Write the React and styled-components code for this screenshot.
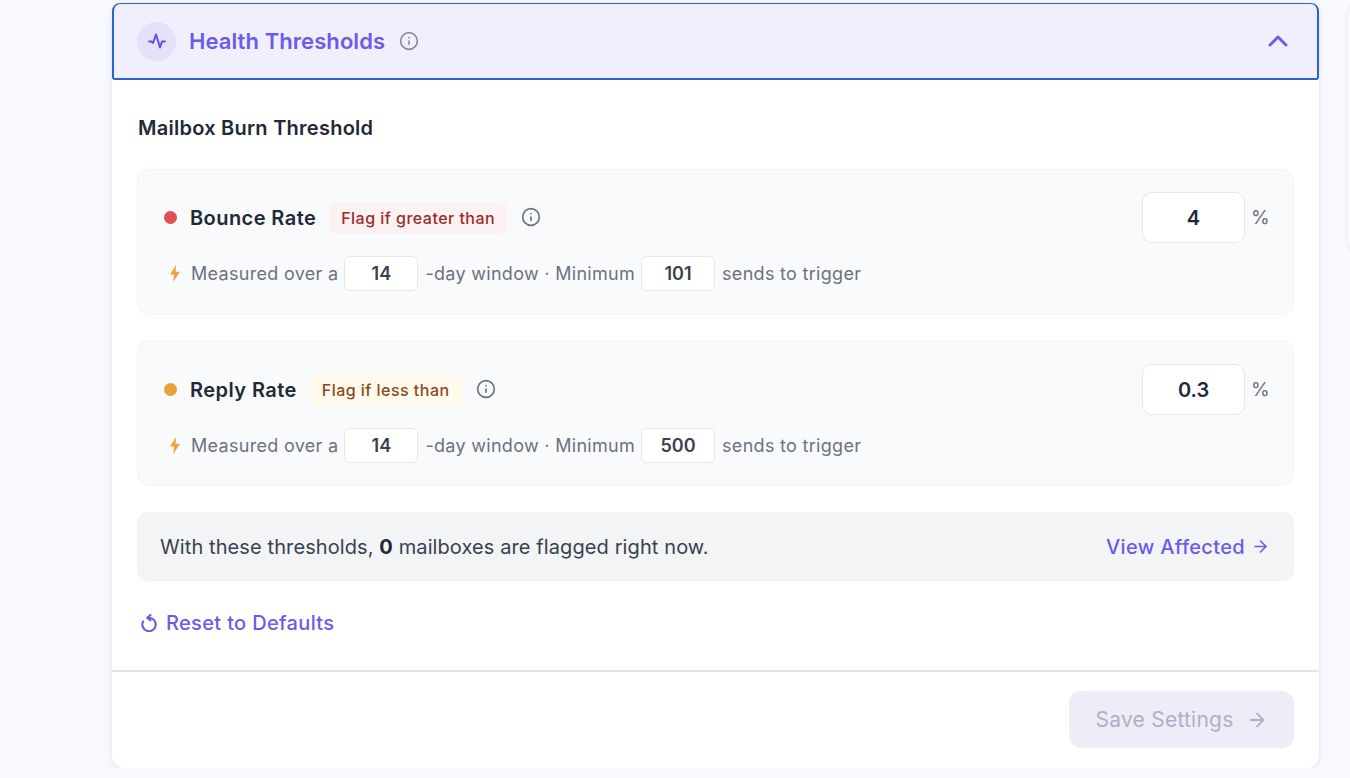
import { createGlobalStyle, styled } from "styled-components";
import { ChevronUp, Info, ArrowRight } from "lucide-react";

const GlobalStyle = createGlobalStyle`
  html, body {
    margin: 0;
    height: 778px;
    overflow: hidden;
    background: #f8f9ff;
    font-family: "Inter", "Liberation Sans", sans-serif;
  }
`;

const Page = styled.div`
  display: flex;
  align-items: flex-start;
  gap: 28px;
  width: 1350px;
  padding: 3px 0 0 112px;
  box-sizing: border-box;
  overflow: hidden;
`;

const Card = styled.div`
  flex: 0 0 1207px;
  background: #fff;
  border-radius: 12px;
  box-shadow: 0 1px 5px rgba(90, 90, 180, 0.16);
`;

const SidePanel = styled.div`
  flex: 0 0 100px;
  height: 250px;
  border-radius: 12px;
  background: #f8f9ff;
  box-shadow: 0 0 2px rgba(90, 90, 180, 0.2);
`;

const Header = styled.div`
  display: flex;
  align-items: center;
  height: 77px;
  box-sizing: border-box;
  padding: 0 23px 0 23px;
  background: #f1effd;
  border: 2px solid #2b62cc;
  border-top-width: 1px;
  border-radius: 8px 8px 3px 3px;
`;

const IconCircle = styled.div`
  display: flex;
  align-items: center;
  justify-content: center;
  width: 39px;
  height: 39px;
  border-radius: 50%;
  background: #e4e1f9;
  color: #5f52e0;
`;

const HeaderTitle = styled.div`
  margin-left: 13px;
  font-size: 22px;
  font-weight: 600;
  color: #6a5be8;
  letter-spacing: 0.07px;
`;

const InfoIcon = styled(Info)`
  margin-left: 14px;
  color: ${props => props.$color};
  flex: none;
`;

const RowInfoIcon = styled(InfoIcon)`
  margin-bottom: 2px;
`;

const Chevron = styled(ChevronUp)`
  margin-left: auto;
  color: #6a5be8;
`;

const Body = styled.div`
  padding: 34px 25px 0;
`;

const SectionTitle = styled.div`
  font-size: 20px;
  line-height: 28px;
  font-weight: 600;
  color: #1f2937;
  letter-spacing: 0.25px;
  margin-bottom: 27px;
  padding-left: 1px;
`;

const Panel = styled.div`
  height: 146px;
  box-sizing: border-box;
  padding: ${props => props.$top}px 26px 0;
  margin-bottom: 25px;
  background: #f9fafc;
  border: 1px solid #f3f4f6;
  border-radius: 12px;
`;

const TopRow = styled.div`
  display: flex;
  align-items: center;
  height: 51px;
`;

const Dot = styled.span`
  width: 13px;
  height: 13px;
  border-radius: 50%;
  background: ${props => props.$color};
  flex: none;
`;

const RateName = styled.span`
  margin-left: 13px;
  font-size: 20px;
  font-weight: 600;
  color: #1f2937;
  letter-spacing: 0.43px;
`;

const Tag = styled.span`
  margin-left: 13px;
  padding: 0 12px;
  height: 32px;
  display: inline-flex;
  align-items: center;
  border-radius: 6px;
  font-size: 16px;
  font-weight: 500;
  letter-spacing: 0.47px;
  color: ${props => props.$color};
  background: ${props => props.$bg};
`;

const BigInput = styled.div`
  margin-left: auto;
  width: 103px;
  height: 51px;
  box-sizing: border-box;
  display: flex;
  align-items: center;
  justify-content: center;
  background: #fff;
  border: 1px solid #e5e7eb;
  border-radius: 10px;
  font-size: 20px;
  font-weight: 600;
  color: #1f2937;
`;

const Unit = styled.span`
  width: 16px;
  margin-left: 6px;
  font-size: 19px;
  color: #6b7280;
`;

const SubRow = styled.div`
  display: flex;
  align-items: center;
  height: 35px;
  margin-top: 13px;
  padding-left: 6px;
  font-size: 18px;
  letter-spacing: 0.3px;
  color: #6b7280;
  white-space: nowrap;
`;

const Bolt = styled.svg`
  margin-right: 11px;
  flex: none;
`;

const SmallInput = styled.span`
  width: 74px;
  height: 35px;
  margin: 0 7px 0 6px;
  box-sizing: border-box;
  display: inline-flex;
  align-items: center;
  justify-content: center;
  background: #fff;
  border: 1px solid #e5e7eb;
  border-radius: 6px;
  font-size: 18px;
  font-weight: 600;
  letter-spacing: 0;
  color: #374151;
`;

const Notice = styled.div`
  display: flex;
  align-items: center;
  justify-content: space-between;
  height: 69px;
  box-sizing: border-box;
  margin-top: 26px;
  padding: 0 24px 0 23px;
  background: #f3f4f6;
  border-radius: 10px;
  font-size: 20px;
  letter-spacing: 0.1px;
  color: #374151;
  b {
    font-weight: 700;
    color: #1f2937;
  }
`;

const LinkText = styled.span`
  display: inline-flex;
  align-items: center;
  gap: ${props => props.$gap}px;
  font-size: 20px;
  font-weight: 500;
  letter-spacing: 0.34px;
  color: #6a5be8;
`;

const ResetRow = styled.div`
  display: flex;
  height: 34px;
  align-items: center;
  margin-top: 25px;
  padding-left: 3px;
`;

const Footer = styled.div`
  display: flex;
  justify-content: flex-end;
  margin-top: 30px;
  padding: 19px 25px 20px;
  border-top: 2px solid #e5e5e5;
`;

const SaveButton = styled.button`
  display: flex;
  align-items: center;
  justify-content: center;
  gap: 12px;
  width: 225px;
  height: 57px;
  border: 0;
  border-radius: 12px;
  background: #edecf7;
  color: #b0afc6;
  font-family: inherit;
  font-size: 21px;
  font-weight: 400;
  letter-spacing: 0.25px;
`;

const rates = [
  { name: "Bounce Rate", color: "#e05050", flag: "Flag if greater than", tagColor: "#9b2c2c", tagBg: "#fdf2f2", value: "4", min: "101", top: 22 },
  { name: "Reply Rate", color: "#eba038", flag: "Flag if less than", tagColor: "#8a4a1f", tagBg: "#fffaeb", value: "0.3", min: "500", top: 23 },
];

function PulseIcon() {
  return (
    <svg width="18" height="16" viewBox="0 0 18 16" fill="none" stroke="currentColor" strokeWidth="2" strokeLinecap="round" strokeLinejoin="round">
      <path d="M1 8.5H3.5L5 10L8 1.5L12 14.5L14 8.5H17" />
    </svg>
  );
}

function ResetIcon() {
  return (
    <svg width="18" height="18" viewBox="0 0 18 18" fill="none" stroke="currentColor" strokeWidth="2.1" strokeLinecap="round" strokeLinejoin="round">
      <path d="M9 3.8A6.7 6.7 0 1 1 3.1 7.4" />
      <path d="M10.5 1L7.2 3.8L10.5 6.4" />
    </svg>
  );
}

function App() {
  return (
    <>
      <GlobalStyle />
      <Page>
        <Card>
          <Header>
            <IconCircle><PulseIcon /></IconCircle>
            <HeaderTitle>Health Thresholds</HeaderTitle>
            <InfoIcon size={20} $color="#8b8ba3" />
            <Chevron size={32} strokeWidth={2.2} />
          </Header>
          <Body>
            <SectionTitle>Mailbox Burn Threshold</SectionTitle>
            {rates.map(rate => (
              <Panel key={rate.name} $top={rate.top}>
                <TopRow>
                  <Dot $color={rate.color} />
                  <RateName>{rate.name}</RateName>
                  <Tag $color={rate.tagColor} $bg={rate.tagBg}>{rate.flag}</Tag>
                  <RowInfoIcon size={20} $color="#6b7280" />
                  <BigInput>{rate.value}</BigInput>
                  <Unit>%</Unit>
                </TopRow>
                <SubRow>
                  <Bolt width="10" height="17" viewBox="0 0 10 17" fill="#eea23a">
                    <path d="M6 0L0 9.6H4L3.2 17L10 6.8H5.6Z" />
                  </Bolt>
                  Measured over a
                  <SmallInput>14</SmallInput>
                  -day window · Minimum
                  <SmallInput>{rate.min}</SmallInput>
                  sends to trigger
                </SubRow>
              </Panel>
            ))}
            <Notice>
              <span>With these thresholds, <b>0</b> mailboxes are flagged right now.</span>
              <LinkText $gap={6}>View Affected <ArrowRight size={19} /></LinkText>
            </Notice>
            <ResetRow>
              <LinkText $gap={8}><ResetIcon /> Reset to Defaults</LinkText>
            </ResetRow>
          </Body>
          <Footer>
            <SaveButton>Save Settings <ArrowRight size={22} /></SaveButton>
          </Footer>
        </Card>
        <SidePanel />
      </Page>
    </>
  );
}

export default App;
